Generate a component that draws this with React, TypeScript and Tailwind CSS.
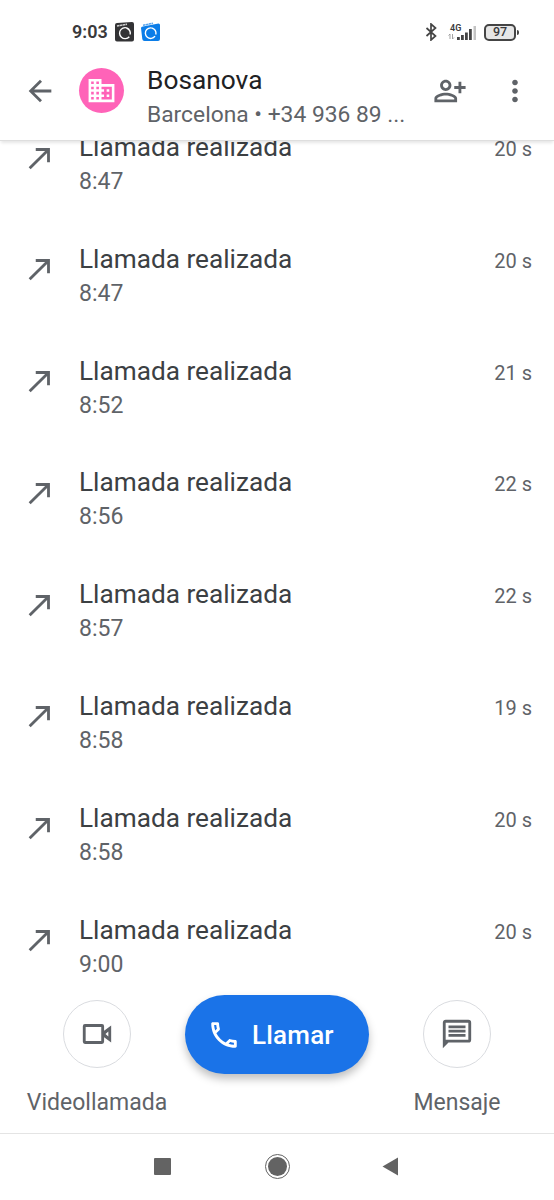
import type { ReactNode } from 'react';

type Call = { time: string; duration: string };

const calls: Call[] = [
  { time: '8:47', duration: '20 s' },
  { time: '8:47', duration: '20 s' },
  { time: '8:52', duration: '21 s' },
  { time: '8:56', duration: '22 s' },
  { time: '8:57', duration: '22 s' },
  { time: '8:58', duration: '19 s' },
  { time: '8:58', duration: '20 s' },
  { time: '9:00', duration: '20 s' },
];

function Icon({ children, className = 'size-[34px]' }: { children: ReactNode; className?: string }) {
  return (
    <svg viewBox="0 0 24 24" fill="currentColor" className={`shrink-0 ${className}`} aria-hidden="true">
      {children}
    </svg>
  );
}

function StatusBar() {
  return (
    <div className="flex h-16 items-center pr-[35px] pl-[72px] text-[#3a3a3c]">
      <span className="w-[43px] text-[18px] leading-5 font-semibold">9:03</span>
      <svg viewBox="0 0 19 20" className="h-5 w-[19px]" aria-hidden="true">
        <path d="M2 1 17 0q2 0 2 2v15.500q0 2-2 2H2q-2 0-2-2V3q0-2 2-2z" fill="#333335" />
        <path d="M2 4 12 2.200" stroke="#cfcfcf" strokeWidth="1.600" strokeDasharray="2.600 .4" />
        <path d="M14 7.300a5.500 5.500 0 1 0 .3 7.400M11.500 6q4.500 2 3.700 6.500" fill="none" stroke="#fff" strokeWidth="1.400" />
      </svg>
      <svg viewBox="0 0 19 20" className="ml-[7px] h-5 w-[19px]" aria-hidden="true">
        <path d="M2 4.500 17.500 1.500Q19 1.500 19 3v14q0 2-2 2H3.500q-2 0-2.200-2L0 6q0-1.500 2-1.500z" fill="#0b7de8" />
        <path d="M2 3.200 12 1.300" stroke="#5aa6ee" strokeWidth="1.500" strokeDasharray="2.600 .4" />
        <path d="M13.500 7.500a5.300 5.300 0 1 0 .5 6.700M11 6.200q4.500 1.500 3.900 6.300" fill="none" stroke="#fff" strokeWidth="1.400" />
      </svg>

      <svg viewBox="0 0 12 18" className="ml-auto h-[18px] w-3" fill="none" stroke="#444" strokeWidth="1.700" aria-hidden="true">
        <path d="m1.500 5 9 8L6 17V1l4.500 4-9 8" />
      </svg>
      <div className="ml-[11px] flex w-[30px] flex-col">
        <span className="ml-[2px] h-[8px] text-[9px] leading-[8px] font-semibold">4G</span>
        <svg viewBox="0 0 30 15" className="-mt-[7px] h-[15px] w-[30px]" aria-hidden="true">
          <path d="M2 14V9L.5 10.500M4.500 9v5L6 12.500" fill="none" stroke="#999" strokeWidth=".9" />
          <path d="M9 12h2.800v3H9zM13 10h2.800v5H13zM17 7.500h2.800V15H17zM21 4h2.800v11H21z" fill="#444" />
          <path d="M25.500 1H28v14h-2.500z" fill="#c4c4c4" />
        </svg>
      </div>
      <div className="ml-[6px] flex items-center">
        <div className="flex h-[17px] w-8 items-center justify-center rounded-[5px] border-2 border-[#444] bg-[#e6e6e6] text-[12.5px] leading-3 font-medium">
          97
        </div>
        <div className="ml-px h-[5px] w-[2px] rounded-r bg-[#444]" />
      </div>
    </div>
  );
}

function Header() {
  return (
    <header className="relative z-10 flex h-[77px] items-start border-b border-[#dedede] bg-white pr-[22.5px] pl-[22.500px] text-[#5f6368] shadow-[0_3px_3px_-1px_rgba(0,0,0,0.1)]">
      <button type="button" aria-label="Atrás" className="mt-[10px]">
        <Icon>
          <path d="M20 11H7.830l5.590-5.590L12 4l-8 8 8 8 1.410-1.410L7.830 13H20v-2z" />
        </Icon>
      </button>
      <div className="mt-1 ml-[22.5px] flex size-[45px] shrink-0 items-center justify-center rounded-full bg-[#ff63b8] text-white">
        <Icon className="size-[31px]">
          <path d="M12 7V3H2v18h20V7H12zM6 19H4v-2h2v2zm0-4H4v-2h2v2zm0-4H4V9h2v2zm0-4H4V5h2v2zm4 12H8v-2h2v2zm0-4H8v-2h2v2zm0-4H8V9h2v2zm0-4H8V5h2v2zm10 12h-8v-2h2v-2h-2v-2h2v-2h-2V9h8v10zm-2-8h-2v2h2v-2zm0 4h-2v2h2v-2z" />
        </Icon>
      </div>
      <div className="-mt-px ml-[23px] w-[264px] shrink-0">
        <h1 className="text-[26.3px] leading-[34px] text-[#202124]">Bosanova</h1>
        <p className="mt-px text-[22.8px] leading-[34px] whitespace-nowrap">Barcelona • +34 936 89 ...</p>
      </div>
      <button type="button" aria-label="Añadir contacto" className="mt-[10px] ml-[21.5px]">
        <Icon>
          <path d="M13 8c0-2.210-1.790-4-4-4S5 5.790 5 8s1.790 4 4 4 4-1.790 4-4zm-2 0c0 1.100-.9 2-2 2s-2-.9-2-2 .9-2 2-2 2 .9 2 2zM1 17.200V20h16v-2.800C17 14.600 11.700 13.200 9 13.200S1 14.600 1 17.200zM3 18v-.8c.2-.7 3.300-2 6-2s5.800 1.300 6 2v.8H3zM20 13.500v-3h3v-2h-3v-3h-2v3h-3v2h3v3h2z" />
        </Icon>
      </button>
      <button type="button" aria-label="Más opciones" className="mt-[10px] ml-auto">
        <Icon>
          <path d="M12 8c1.100 0 2-.9 2-2s-.9-2-2-2-2 .9-2 2 .9 2 2 2zm0 2c-1.100 0-2 .9-2 2s.9 2 2 2 2-.9 2-2-.9-2-2-2zm0 6c-1.100 0-2 .9-2 2s.9 2 2 2 2-.9 2-2-.9-2-2-2z" />
        </Icon>
      </button>
    </header>
  );
}

function CallRow({ call }: { call: Call }) {
  return (
    <li className="flex h-[111.8px] items-start pr-[22px] pl-[22.5px] text-[#5f6368]">
      <Icon className="mt-[10.500px] size-[34px]">
        <path d="M9 5v2h6.590L4 18.590 5.410 20 17 8.410V15h2V5z" />
      </Icon>
      <div className="ml-[22.5px] flex flex-1 items-baseline justify-between">
        <div>
          <p className="text-[26.2px] leading-[34px] text-[#3c4043]">Llamada realizada</p>
          <p className="mt-px text-[23px] leading-[34px]">{call.time}</p>
        </div>
        <span className="text-[20px] leading-[34px]">{call.duration}</span>
      </div>
    </li>
  );
}

function RoundAction({ label, children }: { label: string; children: ReactNode }) {
  return (
    <button type="button" className="flex w-[180px] flex-col items-center pt-[15px] text-[#5f6368]">
      <span className="flex size-[68px] items-center justify-center rounded-full border border-[#dadce0]">
        <Icon>{children}</Icon>
      </span>
      <span className="mt-[17.5px] text-[23px] leading-[34px]">{label}</span>
    </button>
  );
}

function Actions() {
  return (
    <div className="flex h-[148px] items-start justify-center bg-white">
      <RoundAction label="Videollamada">
        <path d="M3.500 5h12A1.500 1.500 0 0 1 17 6.500v3.200L22 6v12l-5-3.700v3.200a1.500 1.500 0 0 1-1.500 1.500h-12A1.500 1.500 0 0 1 2 17.500v-11A1.500 1.500 0 0 1 3.500 5zM4 7v10h11V7H4zm16 3.200L18 12l2 1.800v-3.600z" />
      </RoundAction>
      <div className="flex w-[180px] justify-center pt-[10px]">
        <button
          type="button"
          className="flex h-[79px] w-[184px] shrink-0 items-center rounded-full bg-[#1a73e8] pl-[22px] text-white shadow-[0_5px_9px_rgba(0,0,0,0.25)]"
        >
          <Icon>
            <path d="M6.540 5c.06.890.210 1.760.450 2.590l-1.200 1.200c-.410-1.200-.670-2.470-.760-3.790h1.510m9.860 12.020c.850.240 1.720.390 2.600.450v1.490c-1.320-.090-2.590-.350-3.800-.750l1.200-1.190M7.500 3H4c-.550 0-1 .450-1 1 0 9.390 7.610 17 17 17 .550 0 1-.450 1-1v-3.490c0-.550-.450-1-1-1-1.240 0-2.450-.200-3.570-.570a.840.840 0 0 0-.310-.050c-.260 0-.510.100-.710.290l-2.200 2.200a15.149 15.149 0 0 1-6.590-6.590l2.200-2.200c.280-.280.360-.670.250-1.020A11.360 11.360 0 0 1 8.500 4c0-.550-.450-1-1-1z" />
          </Icon>
          <span className="ml-[11px] text-[26px] leading-[34px] font-medium tracking-[0.2px]">Llamar</span>
        </button>
      </div>
      <RoundAction label="Mensaje">
        <path d="M4 2h16a2 2 0 0 1 2 2v12a2 2 0 0 1-2 2H6l-4 4V4c0-1.100.9-2 2-2zm0 2v12h16V4H4zm2 8h12v2H6v-2zm0-3h12v2H6V9zm0-3h12v2H6V6z" />
      </RoundAction>
    </div>
  );
}

function NavBar() {
  return (
    <nav className="flex h-[67px] items-center justify-center border-t border-[#e4e4e4] bg-white pr-0.5 pb-px text-[#636363]">
      <div className="size-[17px] rounded-[1px] bg-current" />
      <div className="mr-[92px] ml-[94px] flex size-[25px] items-center justify-center rounded-full border-[1.5px] border-current">
        <div className="size-[19px] rounded-full bg-current" />
      </div>
      <svg viewBox="0 0 17 19" className="h-[19px] w-[17px]" fill="currentColor" aria-hidden="true">
        <path d="M16 .5v18L.5 9.500z" />
      </svg>
    </nav>
  );
}

export default function App() {
  return (
    <div className="flex h-[1200px] w-[554px] flex-col overflow-hidden bg-white font-[Roboto,'Noto_Sans',sans-serif]">
      <StatusBar />
      <Header />
      <main className="h-[844px] overflow-hidden">
        <ul className="-mt-[11px]">
          {calls.map((call, i) => (
            <CallRow key={i} call={call} />
          ))}
        </ul>
      </main>
      <Actions />
      <NavBar />
    </div>
  );
}
